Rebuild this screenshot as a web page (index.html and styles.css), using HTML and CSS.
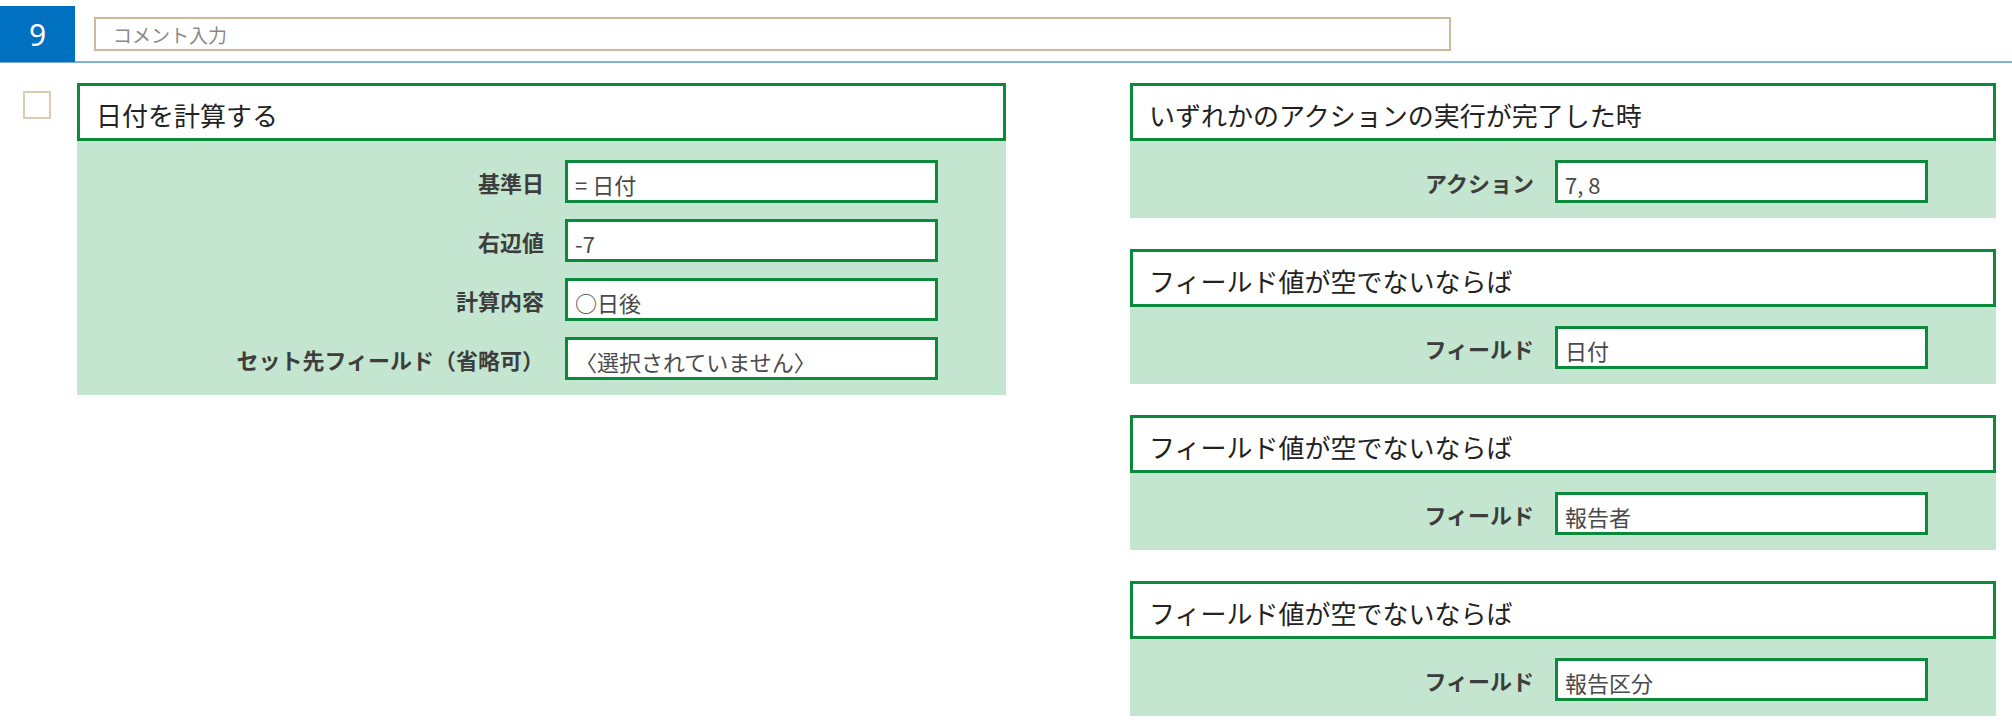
FILE: index.html
```html
<!DOCTYPE html>
<html lang="ja">
<head>
<meta charset="utf-8">
<title>アクション 9</title>
<link rel="stylesheet" href="styles.css">
</head>
<body>
<div class="topbar">
  <div class="step-no">9</div>
  <div class="comment">コメント入力</div>
</div>
<div class="main">
  <div class="check"></div>
  <section class="card card-wide">
    <div class="card-head">日付を計算する</div>
    <div class="card-body">
      <div class="row"><span class="label">基準日</span><div class="field">= 日付</div></div>
      <div class="row"><span class="label">右辺値</span><div class="field">-7</div></div>
      <div class="row"><span class="label">計算内容</span><div class="field">○日後</div></div>
      <div class="row"><span class="label">セット先フィールド（省略可）</span><div class="field">〈選択されていません〉</div></div>
    </div>
  </section>
  <div class="col-right">
    <section class="card">
      <div class="card-head">いずれかのアクションの実行が完了した時</div>
      <div class="card-body">
        <div class="row"><span class="label">アクション</span><div class="field">7, 8</div></div>
      </div>
    </section>
    <section class="card">
      <div class="card-head">フィールド値が空でないならば</div>
      <div class="card-body">
        <div class="row"><span class="label">フィールド</span><div class="field">日付</div></div>
      </div>
    </section>
    <section class="card">
      <div class="card-head">フィールド値が空でないならば</div>
      <div class="card-body">
        <div class="row"><span class="label">フィールド</span><div class="field">報告者</div></div>
      </div>
    </section>
    <section class="card">
      <div class="card-head">フィールド値が空でないならば</div>
      <div class="card-body">
        <div class="row"><span class="label">フィールド</span><div class="field">報告区分</div></div>
      </div>
    </section>
  </div>
</div>
</body>
</html>
```
FILE: styles.css
```css
html, body {
  margin: 0;
  padding: 0;
  background: #ffffff;
}
body {
  font-family: "Noto Sans CJK JP", "Noto Sans", sans-serif;
  color: #222;
}
.topbar {
  display: flex;
  align-items: flex-start;
  padding-top: 6px;
  height: 55px;
  border-bottom: 2px solid #7eb1e0;
}
.step-no {
  width: 75px;
  height: 56px;
  background: #0070c0;
  color: #fff;
  font-family: "Noto Sans", sans-serif;
  font-size: 30px;
  display: flex;
  align-items: center;
  justify-content: center;
  position: relative;
  z-index: 1;
}
.comment {
  margin-left: 19px;
  margin-top: 11px;
  width: 1357px;
  height: 34px;
  box-sizing: border-box;
  border: 2px solid #cdb99b;
  padding-left: 17px;
  font-size: 19px;
  color: #8a8a8a;
  display: flex;
  align-items: center;
}
.main {
  display: flex;
  align-items: flex-start;
  padding-top: 20px;
}
.check {
  margin-left: 23px;
  margin-top: 8px;
  width: 28px;
  height: 28px;
  box-sizing: border-box;
  border: 2px solid #dacbb2;
  flex: none;
}
.card-wide {
  margin-left: 26px;
  width: 929px;
  flex: none;
}
.col-right {
  margin-left: 124px;
  width: 866px;
  flex: none;
  display: flex;
  flex-direction: column;
  gap: 31px;
}
.card-head {
  height: 58px;
  box-sizing: border-box;
  border: 3px solid #0b8a3b;
  background: #fff;
  padding: 4px 0 0 16px;
  display: flex;
  align-items: center;
  font-size: 26px;
  color: #222;
}
.card-body {
  background: #c4e5cf;
  padding: 19px 68px 15px 0;
  display: flex;
  flex-direction: column;
  align-items: flex-end;
  gap: 16px;
}
.row {
  display: flex;
  align-items: center;
  gap: 21px;
}
.label {
  font-size: 22px;
  font-weight: bold;
  color: #3d3d3d;
}
.field {
  width: 373px;
  height: 43px;
  box-sizing: border-box;
  border: 3px solid #0b8a3b;
  background: #fff;
  padding: 4px 0 0 7px;
  display: flex;
  align-items: center;
  font-size: 22px;
  color: #4a4a4a;
}
```
